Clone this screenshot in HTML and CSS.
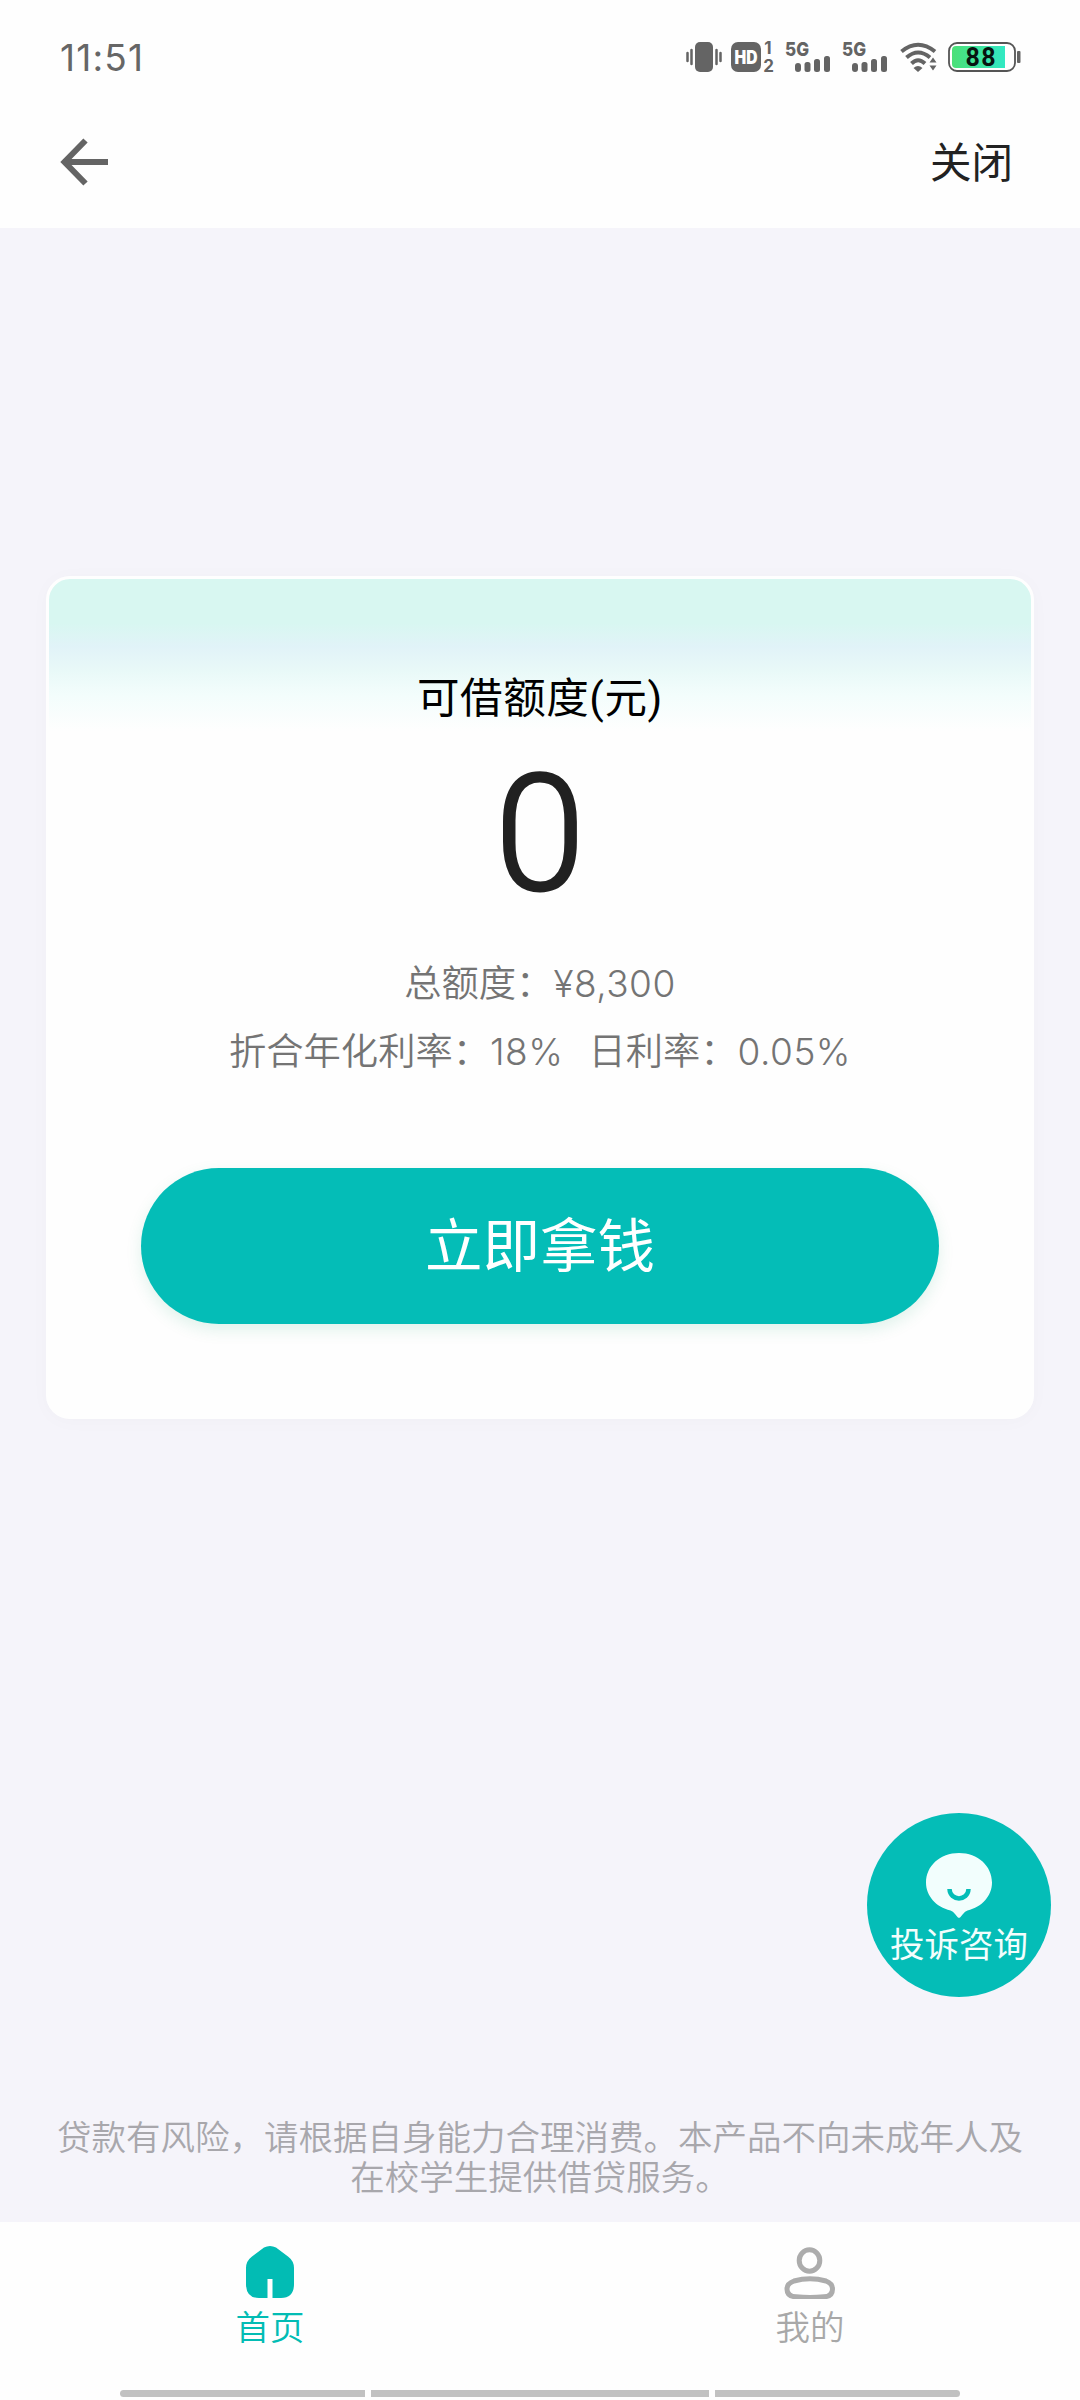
FILE: index.html
```html
<!DOCTYPE html>
<html lang="zh-CN">
<head>
<meta charset="utf-8">
<title>首页</title>
<link rel="stylesheet" href="styles.css">
</head>
<body>
<div class="app">
  <div class="status">
    <span class="clock">11:51</span>
    <div class="status-icons">
      <svg class="vibrate" width="36" height="30" viewBox="0 0 36 30"><rect x="9" width="18" height="30" rx="5"/><path d="M1.5 11v8M5.5 8v14M30.500 8v14M34.500 11v8" class="line"/></svg>
      <svg class="hd" width="44" height="30" viewBox="0 0 44 30"><rect width="30" height="30" rx="7"/><text x="3.500" y="21.700" textLength="23" lengthAdjust="spacingAndGlyphs" class="hd-text">HD</text><text x="37" y="12" class="sim">1</text><text x="37.500" y="29.500" class="sim">2</text></svg>
      <svg class="signal" width="45" height="30" viewBox="0 0 45 30"><text x="0" y="14" textLength="24" lengthAdjust="spacingAndGlyphs" class="net">5G</text><rect x="10" y="21" width="6" height="9" rx="3"/><rect x="19.500" y="20" width="6" height="10" rx="2.500"/><rect x="29" y="17" width="6" height="13" rx="2.500"/><rect x="39" y="14" width="6" height="16" rx="2.500"/></svg>
      <svg class="signal" width="45" height="30" viewBox="0 0 45 30"><text x="0" y="14" textLength="24" lengthAdjust="spacingAndGlyphs" class="net">5G</text><rect x="10" y="21" width="6" height="9" rx="3"/><rect x="19.500" y="20" width="6" height="10" rx="2.500"/><rect x="29" y="17" width="6" height="13" rx="2.500"/><rect x="39" y="14" width="6" height="16" rx="2.500"/></svg>
      <svg class="wifi" width="37" height="30" viewBox="0 0 37 30"><path class="arc" d="M1.500 9.500Q18 -4 35 9.500M6.500 15.500Q18 5.500 30 15.500M11.500 21.500Q18 15 25 21.500"/><path d="M13.500 26Q18 22 22.500 26L18 30ZM29.500 20.500h7L33 15.500ZM29.500 23.500h7L33 28.500Z"/></svg>
      <svg class="battery" width="73" height="30" viewBox="0 0 73 30"><defs><linearGradient id="charge"><stop offset="0" stop-color="#4be077"/><stop offset="1" stop-color="#32e9c4"/></linearGradient></defs><rect x="1" y="1" width="66" height="28" rx="8" fill="#fff" stroke="#555" stroke-width="1.800"/><path d="M8 4H57V26H8Q4 26 4 22V8Q4 4 8 4Z" fill="url(#charge)"/><text x="17.500" y="24" textLength="30" class="percent">88</text><rect x="69" y="9" width="3.500" height="12" rx="1"/></svg>
    </div>
  </div>
  <header class="bar">
    <svg width="48" height="48" viewBox="0 0 48 48" class="back"><path d="M25.500 2.500L4.500 24L25.500 45.500M4.500 24H48"/></svg>
    <span class="close">关闭</span>
  </header>
  <main class="main">
    <section class="card">
      <div class="label">可借额度(元)</div>
      <div class="amount">0</div>
      <div class="info">总额度：<span class="num">¥8,300</span></div>
      <div class="info rates"><span>折合年化利率：<span class="num">18%</span></span><span>日利率：<span class="num">0.05%</span></span></div>
      <button class="cta">立即拿钱</button>
    </section>
    <p class="notice">贷款有风险，请根据自身能力合理消费。本产品不向未成年人及<br>在校学生提供借贷服务。</p>
    <div class="fab">
      <svg width="66" height="66" viewBox="0 0 66 66"><path d="M33 0C52 0 66 13 66 29.500C66 43 56 54 41.500 57.500Q39 58.200 37 61L34.300 64.200Q33 65.500 31.700 64.200L29 61Q27 58.200 24.500 57.500C10 54 0 43 0 29.500C0 13 14 0 33 0Z" fill="#f2fefd"/><path d="M23.500 36C24 48.500 42 48.500 42.500 36" fill="none" stroke="#04bdb7" stroke-width="4.500"/></svg>
      <span>投诉咨询</span>
    </div>
  </main>
  <nav class="tabs">
    <div class="tab active">
      <svg width="50" height="54" viewBox="0 0 50 54"><path d="M19 2.500Q25 -.5 31 2.500L43 11.500Q49 16 49 23V39Q49 53 36 53H27.500V34H22.500V53H14Q1 53 1 39V23Q1 16 7 11.500Z" fill="#02bcb4"/></svg>
      <span>首页</span>
    </div>
    <div class="tab">
      <svg width="52" height="54" viewBox="0 0 52 54" fill="none" stroke="#acacac" stroke-width="5"><ellipse cx="25.500" cy="15.500" rx="10.300" ry="10.700"/><path d="M10 36Q26 31.500 42 36Q48.500 38.500 48.500 44Q48.500 51.500 40 51.800Q26 53 12 51.800Q3 51.500 3 44Q3 38.500 10 36Z"/></svg>
      <span>我的</span>
    </div>
  </nav>
  <div class="gesture"><i></i><i class="mid"></i><i></i></div>
</div>
</body>
</html>
```
FILE: styles.css
```css
* { box-sizing: border-box; }
body { margin: 0; font-family: Roboto, "Noto Sans CJK SC", sans-serif; }
.app { width: 1080px; height: 2400px; display: flex; flex-direction: column; background: #fefefe; overflow: hidden; }

.status { height: 98px; padding: 16px 59px 0 60px; display: flex; justify-content: space-between; align-items: center; color: #666; }
.clock { font: 400 37px/40px Inter, sans-serif; letter-spacing: 1.2px; padding-top: 1px; }
.status-icons { display: flex; align-items: center; fill: #646464; }
.status-icons svg { display: block; overflow: visible; }
.line { stroke: #646464; stroke-width: 2.5; stroke-linecap: round; }
.arc { fill: none; stroke: #646464; stroke-width: 4; }
.hd { margin-left: 9px; }
.hd-text { font: 900 18.5px Inter, sans-serif; fill: #fff; }
.sim { font: 700 17px Inter, sans-serif; text-anchor: middle; }
.net { font: 800 19px Inter, sans-serif; }
.signal { margin-left: 10px; }
.signal + .signal { margin-left: 12px; }
.wifi { margin-left: 13px; }
.battery { margin-left: 11px; }
.percent { font: 700 25px Roboto, sans-serif; fill: #07140f; }

.bar { height: 130px; padding: 0 67px 2px 60px; display: flex; justify-content: space-between; align-items: center; }
.back { fill: none; stroke: #646464; stroke-width: 6; }
.close { font-size: 41.5px; line-height: 60px; color: #222; padding-top: 4px; }

.main { position: relative; height: 1994px; background: #f5f4fa; padding: 348px 46px 0; }
.card { height: 843px; border: 3px solid #fefefe; border-radius: 24px; padding-top: 89px; display: flex; flex-direction: column; align-items: center; background: linear-gradient(#d8f7f1 0, #d8f7f1 44px, #e1f3f8 68px, #e9f9f8 92px, #f3fdfc 116px, #fefefe 152px); box-shadow: 0 2px 20px rgba(30, 20, 60, .025); }
.label { font-size: 42.5px; line-height: 62px; color: #000; letter-spacing: .6px; }
.amount { font-size: 162px; line-height: 200px; font-weight: 350; color: #212121; margin-top: 4px; -webkit-text-stroke: 3px #212121; }
.info { font-size: 37.3px; line-height: 68px; color: #747474; font-weight: 350; }
.amount + .info { margin-top: 16px; }
.num { font-family: Inter, sans-serif; font-size: 37px; line-height: 1; letter-spacing: .5px; }
.rates { display: flex; gap: 25px; }
.cta { width: 798px; height: 156px; margin-top: 82px; padding-bottom: 9px; border: 0; border-radius: 78px; background: #04bdb7; color: #fff; font: 400 57.5px "Noto Sans CJK SC", sans-serif; box-shadow: 0 6px 16px rgba(0, 160, 100, .12); }
.notice { margin: 699px -20px 0; text-align: center; font-size: 34.5px; line-height: 40px; font-weight: 350; color: #a8a7ac; }
.fab { position: absolute; left: 867px; top: 1585px; width: 184px; height: 184px; border-radius: 50%; background: #04bdb7; color: #f2fefd; display: flex; flex-direction: column; align-items: center; padding-top: 40px; font-size: 34.5px; line-height: 52px; white-space: nowrap; }

.tabs { height: 168px; flex: none; display: flex; background: #fefefe; }
.tab { flex: 1; display: flex; flex-direction: column; align-items: center; padding-top: 23px; font-size: 34.5px; line-height: 58px; font-weight: 350; color: #a8a8a8; }
.active { color: #02bcb4; }
.gesture { height: 10px; display: flex; justify-content: center; gap: 6px; }
.gesture i { width: 245px; height: 7px; background: #c1c1c1; }
.gesture .mid { width: 338px; }
.gesture i:first-child { border-radius: 4px 0 0 4px; }
.gesture i:last-child { border-radius: 0 4px 4px 0; }
```
